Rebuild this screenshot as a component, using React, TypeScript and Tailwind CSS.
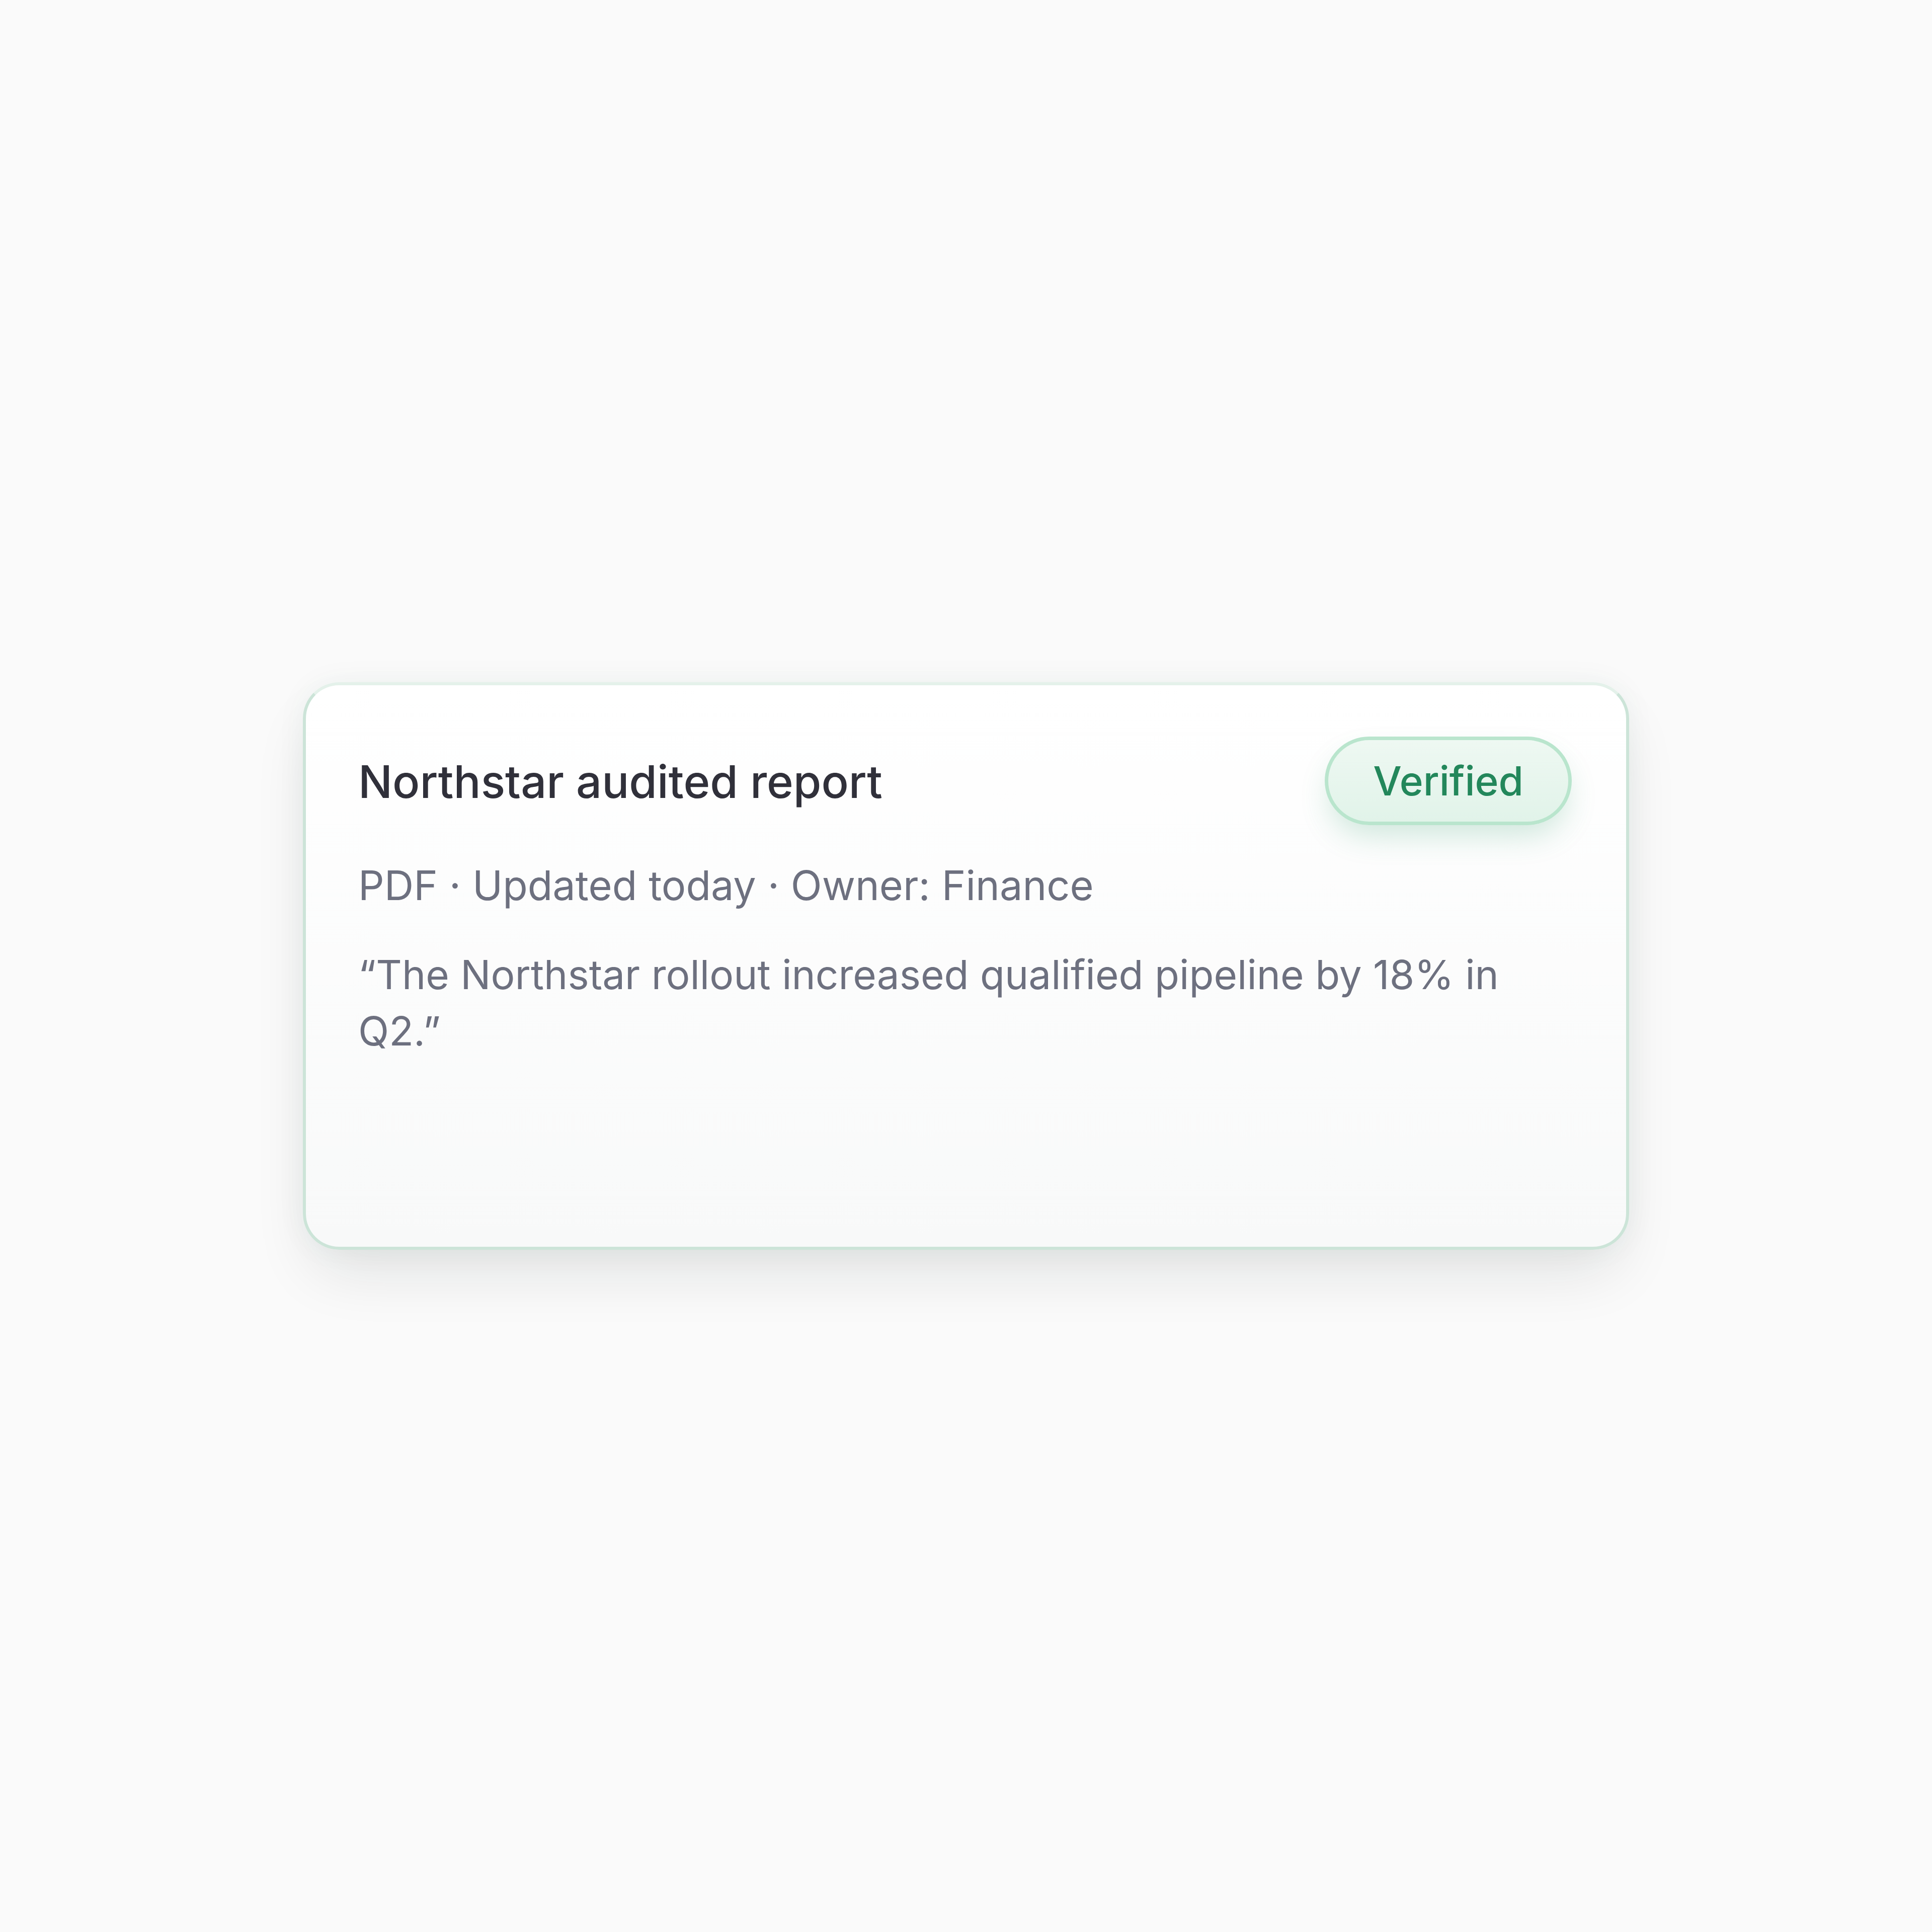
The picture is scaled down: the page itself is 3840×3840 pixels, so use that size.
const meta = ['PDF', 'Updated today', 'Owner: Finance'];

export default function App() {
  return (
    <div className="flex h-[3840px] w-full items-center justify-center bg-[#fafafa] font-['Inter',sans-serif]">
      <div className="flex h-[1128px] w-[2636px] flex-col rounded-[72px] border-[6px] border-[#cce4d8] border-t-[#e4f1ea] bg-gradient-to-b from-white to-[#f8f9f9] pl-[104px] pr-[108px] shadow-[0_60px_120px_-20px_rgba(20,30,30,0.11),0_0_60px_rgba(40,90,70,0.05)]">
        <div className="flex items-center justify-between pt-[100px]">
          <h2 className="mt-[4px] text-[90px] font-medium leading-[1.3] text-[#30303a]">
            Northstar audited report
          </h2>
          <span className="mt-[2px] flex h-[176px] items-center rounded-full border-[7px] border-[#b9e5cd] bg-gradient-to-b from-[#eef8f2] to-[#e1f3e9] px-[89px] text-[80px] font-medium text-[#23875b] shadow-[0_30px_60px_-10px_rgba(40,150,100,0.22)]">
            Verified
          </span>
        </div>

        <p className="mt-[64px] text-[81px] leading-[1.4] text-[#6d707f]">
          {meta.join(' · ')}
        </p>

        <p className="mt-[64px] text-[80px] leading-[1.4] text-[#6d707f]">
          “The Northstar rollout increased qualified pipeline by 18% in Q2.”
        </p>
      </div>
    </div>
  );
}
